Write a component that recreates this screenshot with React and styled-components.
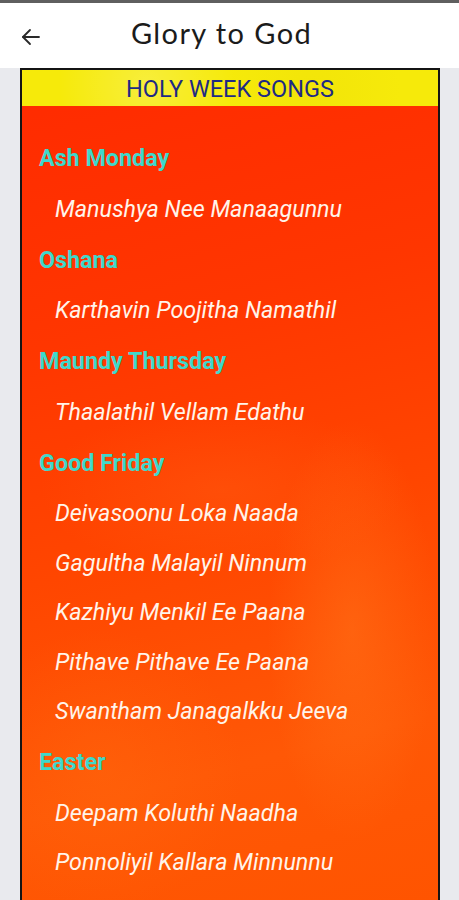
import React from "react";
import styled, { createGlobalStyle } from "styled-components";

const Global = createGlobalStyle`
  html, body { margin: 0; padding: 0; background: #e9eaee; }
  body { font-family: Roboto, "Liberation Sans", sans-serif; }
`;

const Page = styled.div`
  width: 459px;
  height: 900px;
  overflow: hidden;
  display: flex;
  flex-direction: column;
  background: #e9eaee;
`;

const StatusEdge = styled.div`
  height: 3px;
  background: #5f5f5f;
  flex-shrink: 0;
`;

const Header = styled.header`
  height: 65px;
  flex-shrink: 0;
  background: #ffffff;
  display: grid;
  grid-template-columns: 64px 1fr 80px;
  align-items: center;
`;

const BackButton = styled.button`
  border: none;
  background: none;
  padding: 2px 0 0 21px;
  display: flex;
  align-items: center;
  color: #222;
  height: 100%;
`;

const Title = styled.h1`
  margin: 0;
  text-align: center;
  font-family: Lato, "Open Sans", sans-serif;
  font-weight: 400;
  font-size: 29px;
  letter-spacing: 1.4px;
  color: #1b1b1b;
  padding-bottom: 6px;
`;

const Card = styled.section`
  margin: 0 19px 0 20px;
  flex: 1;
  border: 2px solid #141414;
  border-bottom: none;
  display: flex;
  flex-direction: column;
  background:
    radial-gradient(ellipse 120px 300px at 330px 560px, rgba(255,140,40,0.3), transparent 70%),
    radial-gradient(ellipse 260px 120px at 200px 420px, rgba(255,110,30,0.25), transparent 70%),
    radial-gradient(ellipse 200px 200px at 80px 700px, rgba(255,120,20,0.25), transparent 70%),
    linear-gradient(165deg, #ff2a00 0%, #ff3600 30%, #ff4600 55%, #ff5806 80%, #ff5400 100%);
`;

const Banner = styled.div`
  height: 35px;
  background:
    radial-gradient(circle at 30% 40%, rgba(255,255,255,0.2), transparent 30%),
    radial-gradient(circle at 70% 60%, rgba(220,200,0,0.15), transparent 30%),
    #f6ea0a;
  display: flex;
  align-items: center;
  justify-content: center;
  font-family: Roboto, "Liberation Sans", sans-serif;
  font-size: 23.5px;
  color: #1e2a84;
  padding-top: 1px;
`;

const List = styled.ul`
  list-style: none;
  margin: 0;
  padding: 26px 0 0 0;
`;

const Item = styled.li`
  display: flex;
  align-items: center;
  height: ${(p) => (p.$heading ? 52 : 49.5)}px;
  padding-left: ${(p) => (p.$heading ? 17 : 33)}px;
  font-family: Roboto, "Liberation Sans", sans-serif;
  font-size: 23.3px;
  font-weight: ${(p) => (p.$heading ? 700 : 400)};
  font-style: ${(p) => (p.$heading ? "normal" : "italic")};
  color: ${(p) => (p.$heading ? "#3fd8cb" : "#fff4ea")};
`;

const data = [
  ["h", "Ash Monday"],
  ["s", "Manushya Nee Manaagunnu"],
  ["h", "Oshana"],
  ["s", "Karthavin Poojitha Namathil"],
  ["h", "Maundy Thursday"],
  ["s", "Thaalathil Vellam Edathu"],
  ["h", "Good Friday"],
  ["s", "Deivasoonu Loka Naada"],
  ["s", "Gagultha Malayil Ninnum"],
  ["s", "Kazhiyu Menkil Ee Paana"],
  ["s", "Pithave Pithave Ee Paana"],
  ["s", "Swantham Janagalkku Jeeva"],
  ["h", "Easter"],
  ["s", "Deepam Koluthi Naadha"],
  ["s", "Ponnoliyil Kallara Minnunnu"],
];

export default function App() {
  return (
    <Page>
      <Global />
      <StatusEdge />
      <Header>
        <BackButton aria-label="back">
          <svg width="20" height="18" viewBox="0 0 20 18" fill="none" stroke="#2a2a2a" strokeWidth="1.8" strokeLinecap="round" strokeLinejoin="round">
            <path d="M18 9H2" />
            <path d="M9 2L2 9l7 7" />
          </svg>
        </BackButton>
        <Title>Glory to God</Title>
        <div />
      </Header>
      <Card>
        <Banner>HOLY WEEK SONGS</Banner>
        <List>
          {data.map(([k, t]) => (
            <Item key={t} $heading={k === "h"}>{t}</Item>
          ))}
        </List>
      </Card>
    </Page>
  );
}
